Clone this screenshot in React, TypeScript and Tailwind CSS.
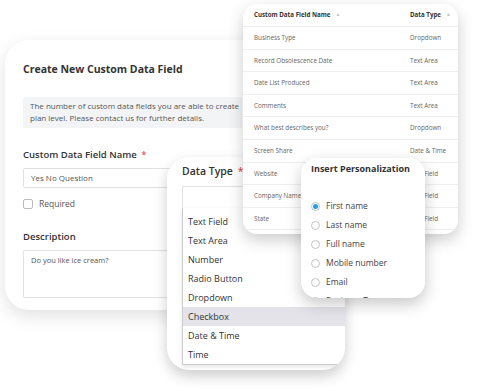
import React from 'react';

const tableRows: [string, string][] = [
  ['Business Type', 'Dropdown'],
  ['Record Obsolescence Date', 'Text Area'],
  ['Date List Produced', 'Text Area'],
  ['Comments', 'Text Area'],
  ['What best describes you?', 'Dropdown'],
  ['Screen Share', 'Date & Time'],
  ['Website', 'Text Field'],
  ['Company Name', 'Text Field'],
  ['State', 'Text Field'],
];

const dataTypes = ['Text Field', 'Text Area', 'Number', 'Radio Button', 'Dropdown', 'Checkbox', 'Date & Time', 'Time'];

const personalization = ['First name', 'Last name', 'Full name', 'Mobile number', 'Email', 'Business Type'];

const font = { fontFamily: '"Open Sans", "Noto Sans", sans-serif' };

const CreateFieldCard = () => (
  <div className="absolute left-[5px] top-[40px] w-[330px] h-[270px] bg-white rounded-[24px] shadow-[0_6px_18px_rgba(0,0,0,0.12)] pl-[18px] pt-[22px]">
    <h2 className="text-[10.5px] leading-[14px] font-bold text-[#333]">Create New Custom Data Field</h2>
    <div className="mt-[21px] h-[31px] w-[219px] overflow-hidden bg-[#f3f4f6] rounded-l-[2px] px-[7px] py-[3px] text-[8px] leading-[12px] text-[#555] whitespace-nowrap">
      <p>The number of custom data fields you are able to create</p>
      <p>plan level. Please contact us for further details.</p>
    </div>
    <div className="mt-[20px] text-[9.5px] leading-[14px] font-semibold text-[#333]">
      Custom Data Field Name <span className="text-[#e25b5b] ml-[2px]">*</span>
    </div>
    <div className="mt-[6px] h-[20px] border border-[#e2e2e2] rounded-[2px] px-[7px] flex items-center text-[8px] text-[#555]">
      Yes No Question
    </div>
    <div className="mt-[10px] flex items-center gap-[6px] h-[12px]">
      <div className="w-[10px] h-[10px] border border-[#bbb] rounded-[2px] bg-white" />
      <span className="text-[8.5px] text-[#555]">Required</span>
    </div>
    <div className="mt-[20px] text-[9.5px] leading-[14px] font-semibold text-[#333]">Description</div>
    <div className="mt-[6px] h-[48px] border border-[#e2e2e2] rounded-[2px] px-[7px] pt-[4px] text-[7.5px] text-[#555]">
      Do you like ice cream?
    </div>
  </div>
);

const DataTypeCard = () => (
  <div className="absolute left-[167px] top-[157px] w-[178px] h-[213px] bg-white rounded-[22px] overflow-hidden shadow-[0_6px_14px_rgba(0,0,0,0.2)] pl-[15px] pt-[7px]">
    <div className="text-[10.5px] leading-[14px] font-semibold text-[#333] whitespace-nowrap">
      Data Type <span className="text-[#e25b5b] ml-[2px]">*</span>
    </div>
    <div className="mt-[8px] h-[22px] w-[200px] border border-[#e2e2e2] border-b-0" />
    <div className="w-[200px] h-[157px] border-l border-b border-[#ccc] pt-[4px] shadow-[0_2px_4px_rgba(0,0,0,0.1)]">
      {dataTypes.map((t) => (
        <div
          key={t}
          className={`h-[19px] pl-[5px] flex items-center text-[9px] text-[#333] ${t === 'Checkbox' ? 'bg-[#e3e3e9]' : ''}`}
        >
          {t}
        </div>
      ))}
    </div>
  </div>
);

const TableCard = () => (
  <div className="absolute left-[243px] top-[4px] w-[215px] h-[230px] bg-white rounded-[14px] overflow-hidden shadow-[0_6px_16px_rgba(0,0,0,0.2)]">
    <div className="grid grid-cols-[167px_1fr] h-[23px] items-center border-b border-[#eee] text-[6.2px] font-bold text-[#333]">
      <div className="pl-[11px] flex items-center gap-[5px]">
        Custom Data Field Name <span className="text-[#c8c8c8] text-[5px]">▲</span>
      </div>
      <div className="flex items-center gap-[5px]">
        Data Type <span className="text-[#c8c8c8] text-[5px]">▲</span>
      </div>
    </div>
    {tableRows.map(([name, type]) => (
      <div key={name} className="grid grid-cols-[167px_1fr] h-[22.6px] items-center border-b border-[#eee] text-[6.3px] text-[#666]">
        <div className="pl-[11px]">{name}</div>
        <div>{type}</div>
      </div>
    ))}
  </div>
);

const PersonalizationCard = () => (
  <div className="absolute left-[301px] top-[158px] w-[124px] h-[140px] bg-white rounded-[16px] overflow-hidden shadow-[0_6px_16px_rgba(0,0,0,0.22)] pl-[10px] pt-[5px]">
    <div className="text-[9px] leading-[12px] font-bold text-[#333] whitespace-nowrap">Insert Personalization</div>
    <div className="mt-[22px]">
      {personalization.map((p, i) => (
        <div key={p} className="h-[19px] flex items-center gap-[6px] whitespace-nowrap">
          <div className="w-[9px] h-[9px] rounded-full border border-[#c4c4c4] flex items-center justify-center bg-white">
            {i === 0 && <div className="w-[5px] h-[5px] rounded-full bg-[#1aa3e8]" />}
          </div>
          <span className="text-[8.5px] text-[#444]">{p}</span>
        </div>
      ))}
    </div>
  </div>
);

export default function App() {
  return (
    <div className="relative w-[477px] h-[391px] bg-white overflow-hidden" style={font}>
      <CreateFieldCard />
      <DataTypeCard />
      <TableCard />
      <PersonalizationCard />
    </div>
  );
}
